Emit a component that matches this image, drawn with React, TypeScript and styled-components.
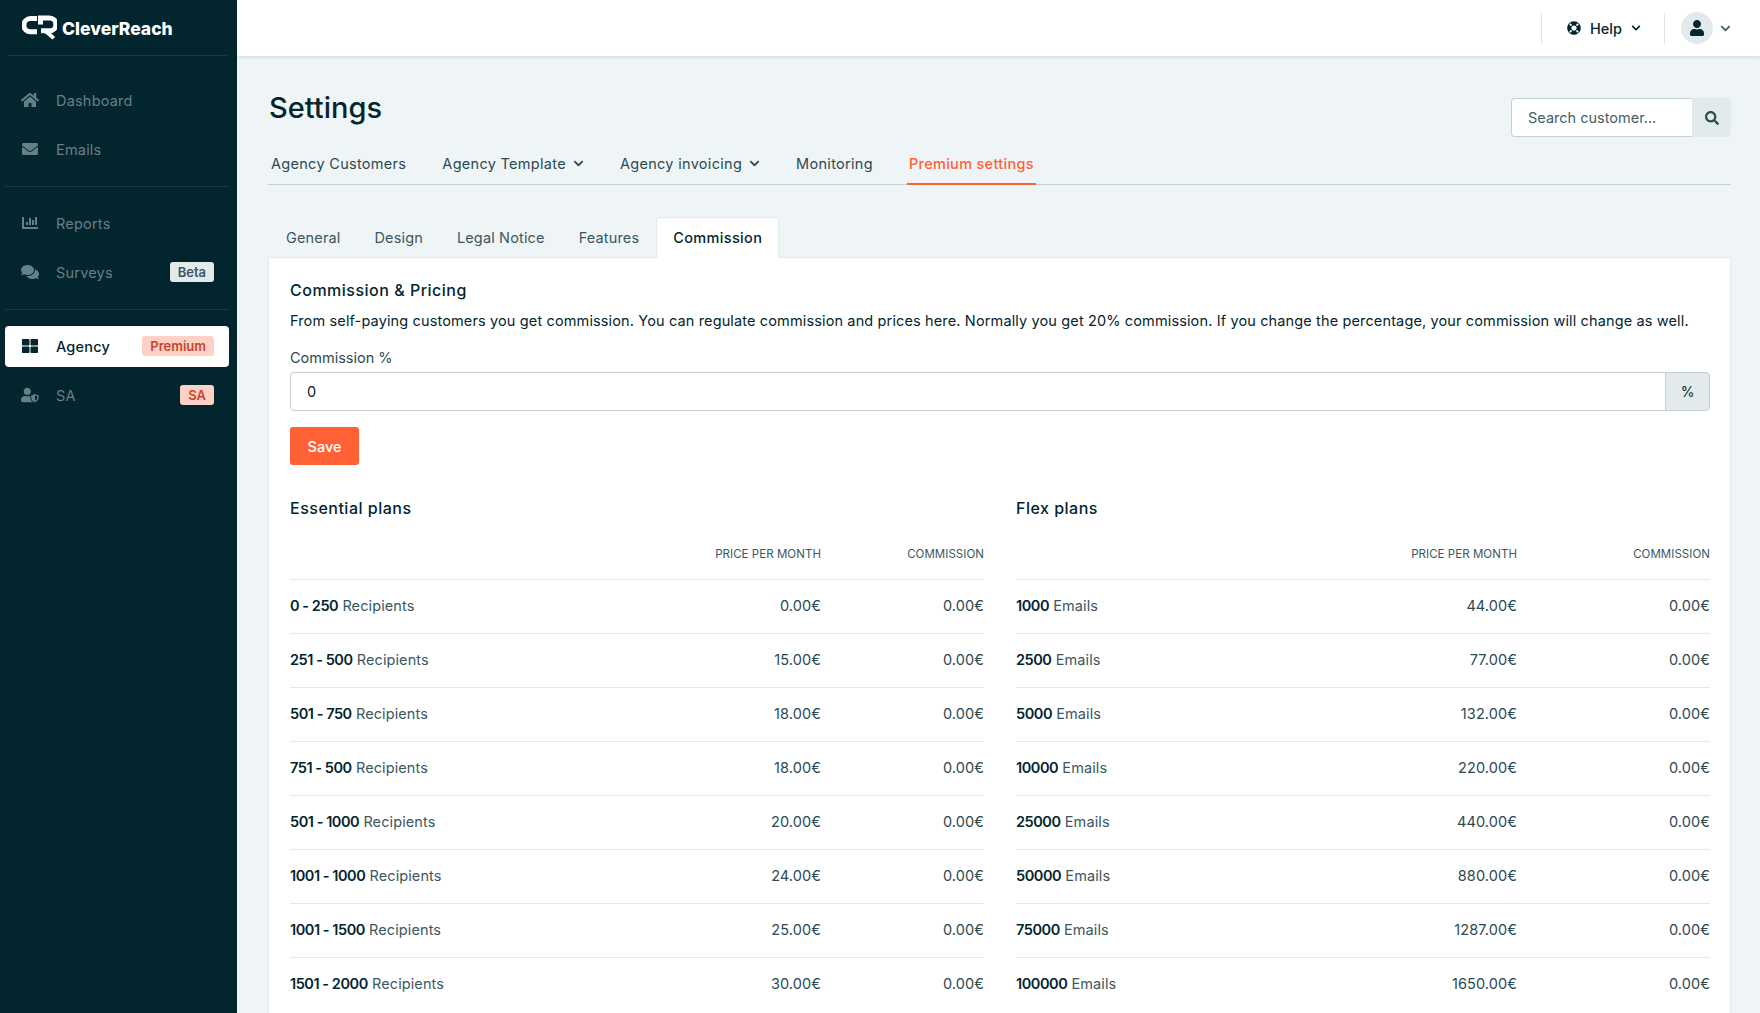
import React from "react";
import styled, { createGlobalStyle } from "styled-components";
import {
  FaHome,
  FaEnvelope,
  FaChartBar,
  FaComments,
  FaThLarge,
  FaUserShield,
  FaLifeRing,
  FaChevronDown,
  FaUser,
  FaSearch,
} from "react-icons/fa";

const ink = "#03252e";
const muted = "#446069";
const sideText = "#658087";
const line = "#c5d0d3";
const fontStack = `Inter, "Noto Sans", "Liberation Sans", sans-serif`;

const GlobalStyle = createGlobalStyle`
  html, body {
    margin: 0;
    height: 100%;
    overflow: hidden;
    background: #eff4f7;
    color: ${ink};
    font-family: ${fontStack};
  }
  * { box-sizing: border-box; }
`;

const Layout = styled.div`
  display: flex;
  height: 1013px;
  overflow: hidden;
`;

const Sidebar = styled.aside`
  flex: 0 0 237px;
  background: #03252e;
  display: flex;
  flex-direction: column;
`;

const Brand = styled.div`
  height: 56px;
  margin: 0 10px 8px 7px;
  padding-left: 15px;
  display: flex;
  align-items: center;
  gap: 5px;
  border-bottom: 1px solid #1c3a42;
`;

const BrandName = styled.span`
  color: #fff;
  font-size: 17.5px;
  font-weight: 800;
  letter-spacing: 0;
  padding-top: 2px;
`;

const NavGroup = styled.nav<{ $last?: boolean }>`
  display: flex;
  flex-direction: column;
  margin-left: 5px;
  width: 224px;
  padding: 16px 0 8px;
  border-bottom: ${(p) => (p.$last ? "none" : "1px solid #1c3a42")};
`;

const NavItem = styled.a<{ $active?: boolean }>`
  height: 41px;
  margin-bottom: 8px;
  padding: 0 15px 1px 16px;
  display: flex;
  align-items: center;
  border-radius: 4px;
  font-size: 14.5px;
  letter-spacing: 0.2px;
  color: ${(p) => (p.$active ? ink : sideText)};
  background: ${(p) => (p.$active ? "#fff" : "transparent")};
  font-weight: ${(p) => (p.$active ? 500 : 400)};
  svg {
    width: 18px;
    height: 16px;
    margin-right: 17px;
    flex: none;
  }
`;

const NavLabel = styled.span`
  flex: 1;
`;

const Badge = styled.span<{ $tone: "beta" | "hot" }>`
  height: 20px;
  padding: 0 8px;
  display: inline-flex;
  align-items: center;
  border-radius: 3px;
  font-size: 13px;
  letter-spacing: 0;
  font-weight: 600;
  color: ${(p) => (p.$tone === "beta" ? "#3c5760" : "#c3472c")};
  background: ${(p) => (p.$tone === "beta" ? "#e3eaec" : "#ffd0c6")};
`;

const Main = styled.div`
  flex: 1;
  min-width: 0;
  display: flex;
  flex-direction: column;
`;

const TopBar = styled.header`
  height: 56px;
  flex: none;
  background: #fff;
  box-shadow: 0 1px 4px rgba(3, 37, 46, 0.14);
  display: flex;
  align-items: center;
  justify-content: flex-end;
  padding-right: 29px;
`;

const TopSection = styled.div`
  height: 31px;
  display: flex;
  align-items: center;
  border-left: 1px solid #dfe5e7;
`;

const HelpSection = styled(TopSection)`
  width: 123px;
  padding-left: 25px;
  gap: 9px;
  font-size: 14.5px;
  font-weight: 500;
`;

const UserSection = styled(TopSection)`
  padding-left: 16px;
  gap: 7px;
`;

const Avatar = styled.span`
  width: 32px;
  height: 32px;
  border-radius: 50%;
  background: #e3eaec;
  display: flex;
  align-items: center;
  justify-content: center;
`;

const Content = styled.main`
  flex: 1;
  padding: 0 29px 0 31px;
  min-height: 0;
`;

const TitleRow = styled.div`
  display: flex;
  justify-content: space-between;
  align-items: flex-start;
  padding-top: 28px;
  height: 87px;
`;

const Title = styled.h1`
  margin: 0;
  padding-left: 1px;
  font-size: 29px;
  line-height: 48px;
  font-weight: 500;
`;

const Search = styled.div`
  margin-top: 14px;
  display: flex;
  height: 39px;
`;

const SearchInput = styled.div`
  width: 181px;
  padding: 0 0 1px 16px;
  display: flex;
  align-items: center;
  background: #fff;
  border: 1px solid ${line};
  border-right: none;
  border-radius: 4px 0 0 4px;
  color: ${muted};
  font-size: 14.5px;
`;

const SearchButton = styled.div`
  width: 39px;
  display: flex;
  align-items: center;
  justify-content: center;
  background: #e3eaec;
  border-radius: 0 4px 4px 0;
`;

const MainTabs = styled.div`
  display: flex;
  height: 42px;
  border-bottom: 1px solid ${line};
  padding-left: 1px;
  gap: 32px;
`;

const MainTab = styled.a<{ $active?: boolean }>`
  margin-bottom: -1px;
  padding: 0 2px;
  display: flex;
  align-items: center;
  gap: 7px;
  font-size: 14.5px;
  letter-spacing: 0.3px;
  color: ${(p) => (p.$active ? "#ff6135" : "#2c4a52")};
  font-weight: ${(p) => (p.$active ? 500 : 400)};
  border-bottom: 2px solid ${(p) => (p.$active ? "#ff6135" : "transparent")};
`;

const SubTabs = styled.div`
  display: flex;
  height: 41px;
  margin-top: 32px;
  padding-left: 1px;
`;

const SubTab = styled.a<{ $active?: boolean }>`
  padding: 0 16px 2px;
  display: flex;
  align-items: center;
  border-radius: 3px 3px 0 0;
  font-size: 14.5px;
  letter-spacing: ${(p) => (p.$active ? "0.35px" : "0.15px")};
  position: relative;
  z-index: 1;
  color: ${(p) => (p.$active ? ink : "#3c5760")};
  font-weight: ${(p) => (p.$active ? 500 : 400)};
  background: ${(p) => (p.$active ? "#fff" : "transparent")};
  border: 1px solid ${(p) => (p.$active ? "#e3eaec" : "transparent")};
  border-bottom: none;
`;

const Card = styled.section`
  background: #fff;
  border: 1px solid #e3eaec;
  margin-top: -1px;
  padding: 20px 20px 0 21px;
  height: 760px;
`;

const SectionTitle = styled.h3`
  margin: 0;
  font-size: 16px;
  line-height: 24px;
  font-weight: 500;
  letter-spacing: 0.5px;
`;

const Intro = styled.p`
  margin: 7px 0 0;
  font-size: 14.5px;
  line-height: 24px;
  letter-spacing: 0.135px;
  white-space: nowrap;
`;

const FieldLabel = styled.label`
  display: block;
  margin-top: 13px;
  font-size: 14.5px;
  line-height: 24px;
  color: #2c4a52;
`;

const InputGroup = styled.div`
  display: flex;
  height: 39px;
  margin-top: 2px;
`;

const InputBox = styled.div`
  flex: 1;
  padding-left: 16px;
  display: flex;
  align-items: center;
  border: 1px solid ${line};
  border-radius: 4px 0 0 4px;
  font-size: 14.5px;
`;

const Addon = styled.div`
  width: 45px;
  display: flex;
  align-items: center;
  justify-content: center;
  margin-left: -1px;
  background: #e3eaec;
  border: 1px solid ${line};
  border-radius: 0 4px 4px 0;
  font-size: 14px;
`;

const SaveButton = styled.button`
  display: block;
  margin-top: 16px;
  width: 69px;
  height: 38px;
  border: none;
  border-radius: 3px;
  background: #ff6135;
  color: #fff;
  font-family: inherit;
  font-size: 14.5px;
  font-weight: 500;
`;

const Plans = styled.div`
  display: grid;
  grid-template-columns: 694px 694px;
  column-gap: 32px;
  margin-top: 31px;
`;

const PlanRow = styled.div<{ $commission: number }>`
  display: grid;
  grid-template-columns: 1fr 170px ${(p) => p.$commission}px;
  align-items: center;
  height: 54px;
  padding-bottom: 2px;
  border-top: 1px solid #e3eaec;
  font-size: 14.5px;
  letter-spacing: 0.1px;
  color: #3c5760;
`;

const HeadRow = styled(PlanRow)`
  height: 48px;
  margin-top: 11px;
  border-top: none;
  font-size: 11.5px;
  letter-spacing: 0.05px;
  font-weight: 400;
  color: #3c5760;
  text-transform: uppercase;
  padding-bottom: 2px;
`;

const Amount = styled.span`
  text-align: right;
  color: #2c4a52;
`;

const HeadCell = styled.span`
  text-align: right;
`;

const Strong = styled.b`
  color: ${ink};
  font-weight: 600;
  letter-spacing: -0.45px;
`;

const LogoMark = () => (
  <svg width="35" height="25" viewBox="0 0 35 25" fill="none">
    <path
      d="M15 3.6 H8.5 A6.6 6.6 0 0 0 8.5 16.8 H15"
      stroke="#fff"
      strokeWidth="5"
    />
    <path
      d="M18.5 9.5 V3 H27.5 A6.4 6.4 0 0 1 27.5 15.8 H19"
      stroke="#fff"
      strokeWidth="5"
    />
    <path d="M21.5 17 L27 16 L33 22 L30.5 24.5 Z" fill="#fff" />
  </svg>
);

const essential = [
  ["0 - 250", "0.00€"],
  ["251 - 500", "15.00€"],
  ["501 - 750", "18.00€"],
  ["751 - 500", "18.00€"],
  ["501 - 1000", "20.00€"],
  ["1001 - 1000", "24.00€"],
  ["1001 - 1500", "25.00€"],
  ["1501 - 2000", "30.00€"],
];

const flex = [
  ["1000", "44.00€"],
  ["2500", "77.00€"],
  ["5000", "132.00€"],
  ["10000", "220.00€"],
  ["25000", "440.00€"],
  ["50000", "880.00€"],
  ["75000", "1287.00€"],
  ["100000", "1650.00€"],
];

const PlanTable = ({
  title,
  unit,
  rows,
  commission,
}: {
  title: string;
  unit: string;
  rows: string[][];
  commission: number;
}) => (
  <div>
    <SectionTitle>{title}</SectionTitle>
    <HeadRow $commission={commission}>
      <span />
      <HeadCell>Price per month</HeadCell>
      <HeadCell>Commission</HeadCell>
    </HeadRow>
    {rows.map(([size, price]) => (
      <PlanRow $commission={commission} key={size}>
        <span>
          <Strong>{size}</Strong> {unit}
        </span>
        <Amount>{price}</Amount>
        <Amount>0.00€</Amount>
      </PlanRow>
    ))}
  </div>
);

const App = () => {
  return (
    <Layout>
      <GlobalStyle />
      <Sidebar>
        <Brand>
          <LogoMark />
          <BrandName>CleverReach</BrandName>
        </Brand>
        <NavGroup>
          <NavItem>
            <FaHome />
            <NavLabel>Dashboard</NavLabel>
          </NavItem>
          <NavItem>
            <FaEnvelope />
            <NavLabel>Emails</NavLabel>
          </NavItem>
        </NavGroup>
        <NavGroup>
          <NavItem>
            <FaChartBar />
            <NavLabel>Reports</NavLabel>
          </NavItem>
          <NavItem>
            <FaComments />
            <NavLabel>Surveys</NavLabel>
            <Badge $tone="beta">Beta</Badge>
          </NavItem>
        </NavGroup>
        <NavGroup $last>
          <NavItem $active>
            <FaThLarge />
            <NavLabel>Agency</NavLabel>
            <Badge $tone="hot">Premium</Badge>
          </NavItem>
          <NavItem>
            <FaUserShield />
            <NavLabel>SA</NavLabel>
            <Badge $tone="hot">SA</Badge>
          </NavItem>
        </NavGroup>
      </Sidebar>
      <Main>
        <TopBar>
          <HelpSection>
            <FaLifeRing size={14} />
            Help
            <FaChevronDown size={10} />
          </HelpSection>
          <UserSection>
            <Avatar>
              <FaUser size={16} />
            </Avatar>
            <FaChevronDown size={11} color={muted} />
          </UserSection>
        </TopBar>
        <Content>
          <TitleRow>
            <Title>Settings</Title>
            <Search>
              <SearchInput>Search customer...</SearchInput>
              <SearchButton>
                <FaSearch size={14} color="#2c4a52" />
              </SearchButton>
            </Search>
          </TitleRow>
          <MainTabs>
            <MainTab>Agency Customers</MainTab>
            <MainTab>
              Agency Template <FaChevronDown size={11} />
            </MainTab>
            <MainTab>
              Agency invoicing <FaChevronDown size={11} />
            </MainTab>
            <MainTab>Monitoring</MainTab>
            <MainTab $active>Premium settings</MainTab>
          </MainTabs>
          <SubTabs>
            <SubTab>General</SubTab>
            <SubTab>Design</SubTab>
            <SubTab>Legal Notice</SubTab>
            <SubTab>Features</SubTab>
            <SubTab $active>Commission</SubTab>
          </SubTabs>
          <Card>
            <SectionTitle>Commission &amp; Pricing</SectionTitle>
            <Intro>
              From self-paying customers you get commission. You can regulate commission and prices
              here. Normally you get 20% commission. If you change the percentage, your commission
              will change as well.
            </Intro>
            <FieldLabel>Commission %</FieldLabel>
            <InputGroup>
              <InputBox>0</InputBox>
              <Addon>%</Addon>
            </InputGroup>
            <SaveButton>Save</SaveButton>
            <Plans>
              <PlanTable title="Essential plans" unit="Recipients" rows={essential} commission={163} />
              <PlanTable title="Flex plans" unit="Emails" rows={flex} commission={193} />
            </Plans>
          </Card>
        </Content>
      </Main>
    </Layout>
  );
};

export default App;
